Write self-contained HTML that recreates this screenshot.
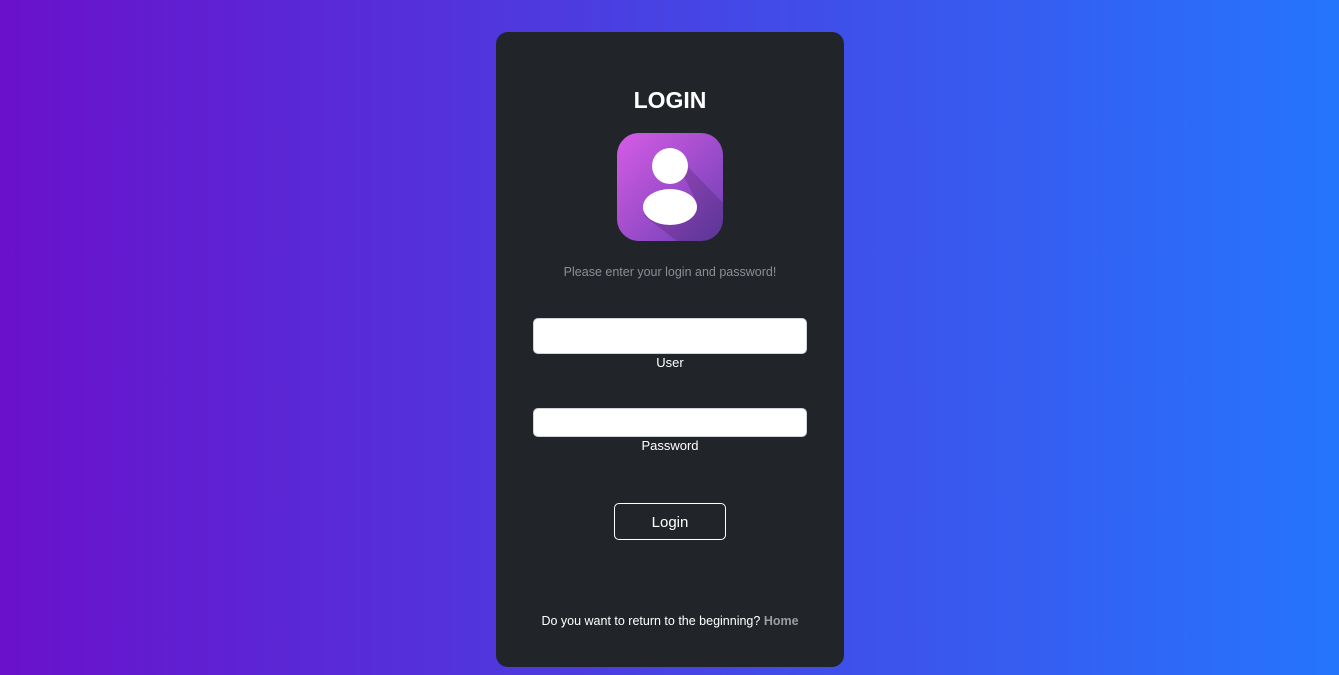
<!DOCTYPE html>
<html><head><style>
body{margin:0;width:1339px;height:675px;background:linear-gradient(to right,#6a11cb,#2575fc);font-family:"Liberation Sans",sans-serif;position:relative;overflow:hidden}
.card{position:absolute;left:496px;top:32px;width:348px;height:635px;background:#212529;border-radius:12px}
.t{position:absolute;left:0;width:348px;text-align:center}
.inp{position:absolute;left:37px;width:272px;background:#fff;border:1px solid #ced4da;border-radius:5px}
</style></head><body>
<div class="card">
<div class="t" style="top:55px;color:#fff;font-weight:bold;font-size:23px">LOGIN</div>
<svg style="position:absolute;left:121px;top:101px" width="106" height="108" viewBox="0 0 106 108">
<defs><linearGradient id="g" x1="0" y1="0" x2="1" y2="1"><stop offset="0" stop-color="#d65ce6"/><stop offset="1" stop-color="#6a3fb3"/></linearGradient>
<clipPath id="c"><rect width="106" height="108" rx="22"/></clipPath></defs>
<rect width="106" height="108" rx="22" fill="url(#g)"/>
<polygon clip-path="url(#c)" points="53,15 106,70 106,108 60,108 26,82 80,70" fill="#000" opacity="0.15"/>
<circle cx="53" cy="33" r="18" fill="#fff"/>
<ellipse cx="53" cy="74" rx="27" ry="18" fill="#fff"/>
</svg>
<div class="t" style="top:233px;color:#8a8f95;font-size:12.5px">Please enter your login and password!</div>
<div class="inp" style="top:286px;height:34px"></div>
<div class="t" style="top:323px;color:#fff;font-size:13px">User</div>
<div class="inp" style="top:376px;height:27px"></div>
<div class="t" style="top:406px;color:#fff;font-size:13px">Password</div>
<div style="position:absolute;left:118px;top:471px;width:110px;height:35px;border:1px solid #fff;border-radius:5px;color:#fff;font-size:15px;text-align:center;line-height:37px">Login</div>
<div class="t" style="top:582px;color:#fff;font-size:12.5px">Do you want to return to the beginning? <b style="color:#9a9ea3">Home</b></div>
</div>
</body></html>
